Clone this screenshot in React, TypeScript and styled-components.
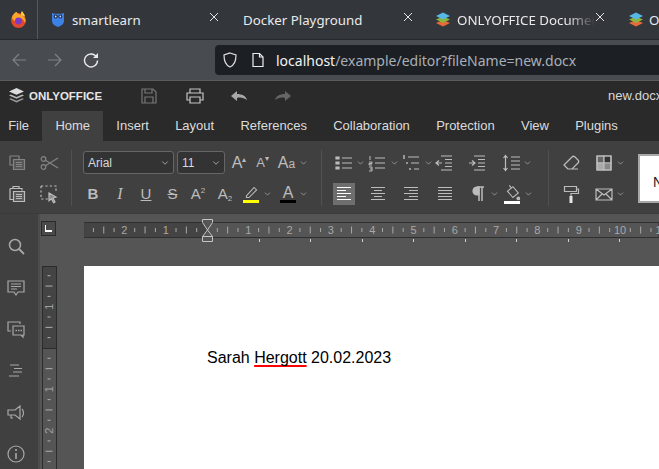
import React from "react";
import styled, { createGlobalStyle } from "styled-components";
import { FiChevronDown } from "react-icons/fi";

const GlobalStyle = createGlobalStyle`
  html, body { margin: 0; padding: 0; background: #555; }
  body { width: 659px; height: 469px; overflow: hidden; font-family: "Liberation Sans", Arial, sans-serif; }
`;

const Page = styled.div`
  width: 659px;
  height: 469px;
  overflow: hidden;
  display: flex;
  flex-direction: column;
`;

/* browser chrome */
const TabBar = styled.div`
  height: 40px;
  flex: none;
  display: flex;
  background: #33363b;
  border-bottom: 1px solid #26282c;
  box-sizing: border-box;
  font-family: "Noto Sans", sans-serif;
  font-size: 13.3px;
  color: #e9eaec;
`;
const FoxCell = styled.div`
  width: 37px;
  flex: none;
  display: flex;
  align-items: center;
  justify-content: center;
  border-right: 1px solid #54575b;
`;
const Tab = styled.div<{ $w: number; $pad: number; $gap: number }>`
  width: ${(p) => p.$w}px;
  flex: none;
  padding-left: ${(p) => p.$pad}px;
  box-sizing: border-box;
  display: flex;
  align-items: center;
  gap: ${(p) => p.$gap}px;
  position: relative;
  white-space: nowrap;
  overflow: hidden;
`;
const TabTitle = styled.span<{ $fade?: boolean }>`
  ${(p) =>
    p.$fade &&
    `width: 138px; overflow: hidden; -webkit-mask-image: linear-gradient(90deg, #000 80%, transparent 100%);`}
`;
const TabClose = styled.span<{ $right: number }>`
  position: absolute;
  right: ${(p) => p.$right}px;
  top: 12px;
  width: 10px;
  height: 10px;
  display: flex;
`;
const NavBar = styled.div`
  height: 41px;
  flex: none;
  display: flex;
  align-items: center;
  background: #484b50;
  border-bottom: 1px solid #5a5c60;
  box-sizing: border-box;
  padding-left: 11px;
`;
const NavButton = styled.span<{ $w: number }>`
  width: ${(p) => p.$w}px;
  flex: none;
  display: flex;
`;
const UrlBar = styled.div`
  flex: 1;
  margin-left: 116px;
  height: 30px;
  background: #1c1f24;
  border-radius: 4px 0 0 4px;
  display: flex;
  align-items: center;
  padding-left: 7px;
  font-family: "Noto Sans", sans-serif;
  font-size: 14px;
  color: #a9afb6;
  gap: 12px;
  white-space: nowrap;
`;
const Host = styled.span`
  color: #f1f2f3;
`;
const UrlText = styled.span`
  margin-left: -2px;
`;

/* editor header */
const AppHeader = styled.div`
  height: 29px;
  flex: none;
  background: #2a2a2a;
  display: flex;
  align-items: center;
  position: relative;
  padding-left: 8px;
  color: #e6e6e6;
`;
const Brand = styled.span`
  display: flex;
  align-items: center;
  gap: 4px;
  font-weight: 700;
  font-size: 11.5px;
  width: 133px;
  flex: none;
`;
const HeadIcon = styled.span<{ $w: number }>`
  width: ${(p) => p.$w}px;
  flex: none;
  display: flex;
`;
const FileName = styled.span`
  position: absolute;
  left: 608px;
  top: 7px;
  font-size: 13px;
  white-space: nowrap;
  color: #d8d8d8;
`;
const MenuBar = styled.div`
  height: 31px;
  flex: none;
  background: #2a2a2a;
  display: flex;
  padding-left: 0;
  font-size: 13px;
  color: #dcdcdc;
  margin-left: -5px;
  width: 664px;
`;
const MenuItem = styled.div<{ $active?: boolean }>`
  flex: none;
  padding: 7px 13.150px 0;
  margin-top: 1px;
  background: ${(p) => (p.$active ? "#404040" : "transparent")};
`;

/* toolbar */
const Toolbar = styled.div`
  height: 73px;
  flex: none;
  background: #404040;
  display: flex;
  padding-top: 10px;
  box-sizing: border-box;
  border-bottom: 1px solid #3a3a3a;
  overflow: hidden;
`;
const Group = styled.div<{ $w: number; $pl?: number }>`
  width: ${(p) => p.$w}px;
  flex: none;
  display: flex;
  flex-direction: column;
  gap: 8px;
  padding-left: ${(p) => p.$pl ?? 11}px;
  box-sizing: border-box;
`;
const Sep = styled.div`
  width: 1px;
  height: 56px;
  margin-top: -1px;
  flex: none;
  background: #505050;
`;
const Row = styled.div`
  height: 23px;
  display: flex;
  align-items: center;
`;
const Cell = styled.span<{ $w: number; $ml?: number; $active?: boolean; $dim?: boolean }>`
  width: ${(p) => p.$w}px;
  margin-left: ${(p) => p.$ml ?? 0}px;
  height: 22px;
  flex: none;
  display: flex;
  align-items: center;
  justify-content: center;
  color: #bcbcbc;
  opacity: ${(p) => (p.$dim ? 0.55 : 1)};
  background: ${(p) => (p.$active ? "#6e6e6e" : "transparent")};
`;
const Letter = styled.span<{ $weight?: number; $italic?: boolean; $line?: string; $size?: number }>`
  font-size: ${(p) => p.$size ?? 15}px;
  font-weight: ${(p) => p.$weight ?? 400};
  font-style: ${(p) => (p.$italic ? "italic" : "normal")};
  text-decoration: ${(p) => p.$line ?? "none"};
  font-family: ${(p) => (p.$italic ? '"Liberation Serif", serif' : '"Liberation Sans", sans-serif')};
  color: #bcbcbc;
  line-height: 1;
`;
const Small = styled.sup`
  font-size: 8px;
  vertical-align: 6px;
  line-height: 0;
`;
const Low = styled.sub`
  font-size: 8px;
  vertical-align: -2px;
  line-height: 0;
`;
const Chev = styled.span`
  width: 9px;
  margin-left: 1px;
  flex: none;
  display: flex;
  color: #c4c4c4;
`;
const ColorBar = styled.span<{ $c: string }>`
  display: block;
  width: 16px;
  height: 3px;
  background: ${(p) => p.$c};
  margin: -1px auto 0;
`;
const Stack = styled.span`
  display: flex;
  flex-direction: column;
  align-items: center;
`;
const Select = styled.div<{ $w: number }>`
  width: ${(p) => p.$w}px;
  height: 23px;
  flex: none;
  box-sizing: border-box;
  border: 1px solid #666;
  border-radius: 3px;
  background: #333;
  display: flex;
  align-items: center;
  justify-content: space-between;
  padding: 0 3px 0 4px;
  font-size: 12px;
  color: #d8d8d8;
  margin-right: 3px;
`;
const StyleBox = styled.div`
  margin-left: 14px;
  margin-top: 3px;
  width: 60px;
  height: 49px;
  flex: none;
  box-sizing: border-box;
  background: #fff;
  border: 2px solid #a8a8a8;
  color: #222;
  font-size: 14px;
  padding: 18px 0 0 13px;
`;

/* work area */
const Main = styled.div`
  flex: 1;
  min-height: 0;
  display: flex;
`;
const SideBar = styled.div`
  width: 32px;
  flex: none;
  background: #404040;
  border-right: 2px solid #4c4c4c;
  display: flex;
  flex-direction: column;
  align-items: center;
  padding: 22px 6px 0 0;
  gap: 21.700px;
  color: #a8a8a8;
`;
const SideIcon = styled.span`
  width: 20px;
  height: 20px;
  display: flex;
`;
const Canvas = styled.div`
  flex: 1;
  min-width: 0;
  background: #555;
  display: grid;
  grid-template-columns: 44px 1fr;
  grid-template-rows: 52px 1fr;
  overflow: hidden;
`;
const CornerCell = styled.div`
  padding: 7px 0 0 1px;
`;
const TabStop = styled.div`
  width: 15px;
  height: 15px;
  box-sizing: border-box;
  border: 1px solid #2b2b2b;
  background: #4a4a4a;
  display: flex;
`;
const HRulerCell = styled.div`
  padding-top: 8px;
  overflow: hidden;
`;
const VRulerCell = styled.div`
  padding-left: 2px;
  overflow: hidden;
`;
const RulerSvg = styled.svg`
  display: block;
  overflow: visible;
`;
const Paper = styled.div`
  background: #fff;
  padding: 82px 0 0 123px;
  color: #000;
  font-size: 16px;
  line-height: 20px;
  white-space: nowrap;
`;
const Misspelled = styled.span`
  text-decoration: underline #f00 1.5px;
  text-decoration-skip-ink: none;
  text-underline-offset: 2px;
`;

const S = ({ children, w = 20, vb = 20 }: { children: React.ReactNode; w?: number; vb?: number }) => (
  <svg width={w} height={w} viewBox={`0 0 ${vb} ${vb}`} fill="none" stroke="currentColor" strokeWidth={1.2}>
    {children}
  </svg>
);

const CloseX = () => (
  <svg width="10" height="10" viewBox="0 0 10 10" stroke="#e4e5e7" strokeWidth="1">
    <path d="M1 1l8 8M9 1l-8 8" />
  </svg>
);

const FirefoxLogo = () => (
  <svg width="17" height="17" viewBox="0 0 17 17">
    <circle cx="8.5" cy="9.5" r="7.5" fill="#e0492d" />
    <path d="M2 6c1-3 3-5 5-5 0 2 3 2 5 3 3 2 4 5 3 8-1-3-3-5-6-5-2 0-4 1-4 3-2-1-3-2-3-4z" fill="#f9a728" />
    <circle cx="8.5" cy="10" r="3.4" fill="#7b3bc6" />
    <path d="M12 0c1 2 3 3 3 6-1-1-3-2-4-2 0-2 0-3 1-4z" fill="#ffcf3d" />
  </svg>
);

const OwlIcon = () => (
  <svg width="12" height="15" viewBox="0 0 12 15">
    <path d="M0 1c2 .8 4 .8 6 .8S10 1.800 12 1v8c0 3-3 5-6 6-3-1-6-3-6-6z" fill="#3c82e6" />
    <circle cx="3.700" cy="4.500" r="2" fill="#1b2a44" />
    <circle cx="8.300" cy="4.500" r="2" fill="#1b2a44" />
    <circle cx="3.700" cy="4.500" r=".9" fill="#cfe0fa" />
    <circle cx="8.300" cy="4.500" r=".9" fill="#cfe0fa" />
  </svg>
);

const LayersIcon = () => (
  <svg width="16" height="15" viewBox="0 0 16 15">
    <path d="M1 11l7-3 7 3-7 3.500z" fill="#e8693a" />
    <path d="M1 7.500l7-3 7 3-7 3.500z" fill="#8ab43c" />
    <path d="M1 4l7-3.500L15 4l-7 3.500z" fill="#55b8e6" />
  </svg>
);

const BrandMark = () => (
  <svg width="17" height="16" viewBox="0 0 17 16" fill="#dcdcdc">
    <path d="M8.500 0l7.500 3.400-7.500 3.400L1 3.400z" />
    <path d="M2.800 6.500l5.700 2.600 5.700-2.600 1.800.9-7.500 3.400L1 7.400z" fill="#b8b8b8" />
    <path d="M2.800 10.200l5.700 2.600 5.700-2.600 1.800.9-7.500 3.400L1 11.100z" fill="#9a9a9a" />
  </svg>
);

const Down = () => <FiChevronDown size={10} strokeWidth={1.6} />;

const icons: Record<string, React.ReactNode> = {
  copy: (
    <>
      <path d="M3 3h9v3M3 3v9h3" />
      <path d="M6.500 6.500h11v10h-11z" fill="#6a6a6a" />
      <path d="M9 9.500h6M9 11.500h6M9 13.500h6" />
    </>
  ),
  cut: (
    <>
      <circle cx="4.500" cy="6" r="2.300" />
      <circle cx="4.500" cy="14" r="2.300" />
      <path d="M6.500 7.200L19 15M6.500 12.800L19 5" />
    </>
  ),
  paste: (
    <>
      <path d="M6 4V2.500h6V4M3 4.500h12v2M3 4.500v11h3" />
      <path d="M6.500 7.500h11v10h-11z" fill="#5a5a5a" />
      <path d="M9 10.500h6M9 12.500h6M9 14.500h6" />
    </>
  ),
  select: (
    <>
      <path d="M2 2h15v7M2 2v13h7" strokeDasharray="2.200 2.200" />
      <path d="M10 9l7 4-3 1 2 4-1.500.7-2-4-2.500 2z" fill="#888" />
    </>
  ),
  bullets: (
    <>
      <path d="M8 5h10M8 10h10M8 15h10" />
      <path d="M2 4h3v2H2zM2 9h3v2H2zM2 14h3v2H2z" fill="currentColor" />
    </>
  ),
  numbered: (
    <>
      <path d="M8 5h10M8 10h10M8 15h10" />
      <path d="M3 3v4M2 9h3v1.500H2V12h3M2 14h3v4H2M3 16h2" strokeWidth="1" />
    </>
  ),
  multi: (
    <>
      <path d="M7 4h11M10 10h8M13 16h5" />
      <path d="M3 2v4M6 9v2M9 15v2" strokeWidth="1.400" />
    </>
  ),
  outdent: <path d="M7 3h11M11 6.500h7M11 10h7M11 13.500h7M7 17h11M8 10H2M5 7.500L2 10l3 2.500" />,
  indent: <path d="M7 3h11M11 6.500h7M11 10h7M11 13.500h7M7 17h11M2 10h6M5 7.500L8 10l-3 2.500" />,
  spacing: <path d="M10 4h9M10 8h9M10 12h9M10 16h9M4.500 2.500v15M2.500 5l2-2.500 2 2.500M2.500 15l2 2.500 2-2.500" />,
  left: <path d="M3 3.500h14M3 6.500h9M3 9.500h14M3 12.500h9M3 15.500h14" stroke="#fff" />,
  center: <path d="M3 3.500h14M6 6.500h8M3 9.500h14M6 12.500h8M3 15.500h14" />,
  right: <path d="M3 3.500h14M8 6.500h9M3 9.500h14M8 12.500h9M3 15.500h14" />,
  justify: <path d="M3 3.500h14M3 6.500h14M3 9.500h14M3 12.500h14M3 15.500h14" />,
  pilcrow: (
    <>
      <path d="M9 3h7M11 3v14M14 3v14" strokeWidth="1.500" />
      <path d="M11 3H9a4 4 0 000 8h2z" fill="currentColor" />
    </>
  ),
  fill: (
    <>
      <path d="M5 8l6-5 6 7-6 5z" />
      <path d="M7 1.500l2.500 3" />
      <circle cx="17" cy="16" r="1.500" fill="currentColor" />
    </>
  ),
  erase: <path d="M3 12l8-8c1-1 2-1 3 0l3 3c1 1 1 2 0 3l-6 6H7zM3 12l4 4M11 16h6" />,
  scheme: (
    <>
      <path d="M3 3h7v7H3z" fill="#666" />
      <path d="M10 3h7v7h-7z" fill="#333" />
      <path d="M3 10h7v7H3z" fill="#aaa" />
      <path d="M10 10h7v7h-7z" fill="#888" />
      <path d="M3 3h14v14H3z" />
    </>
  ),
  roller: (
    <>
      <path d="M3.500 2.500h12v5h-12z" />
      <path d="M15.500 5h2v4.500H10v3" />
      <path d="M8.500 12h3v7h-3z" fill="#e4e4e4" stroke="none" />
    </>
  ),
  mail: <path d="M2 5h16v11H2zM2 5l8 6 8-6M2 16l6-6M18 16l-6-6" />,
};

const Icon = ({ name }: { name: string }) => <S>{icons[name]}</S>;

function HorizontalRuler() {
  const unit = 41.3;
  const zero = 123;
  const marks: React.ReactNode[] = [];
  for (let i = -11; i <= 44; i++) {
    const x = zero + (i * unit) / 4;
    const q = ((i % 4) + 4) % 4;
    if (q === 0) {
      if (i !== 0)
        marks.push(
          <text key={i} x={x} y={12} textAnchor="middle" fontSize="11" fill="#a8a8a8" stroke="none" fontFamily="Liberation Sans">
            {Math.abs(i / 4)}
          </text>
        );
    } else {
      const h = q === 2 ? 3.5 : 2;
      marks.push(<path key={i} d={`M${x} ${8 - h}V${8 + h}`} stroke="#a8a8a8" />);
    }
  }
  const stops = [175, 226, 278, 329, 381, 432, 484, 535];
  return (
    <RulerSvg width="575" height="22" viewBox="0 0 575 22">
      <rect x="0" y="0.500" width="575" height="15" fill="#555" stroke="#2f2f2f" />
      <rect x="0.500" y="1" width="123" height="14" fill="#444" />
      {marks}
      {stops.map((x) => (
        <path key={x} d={`M${x}.500 17v3`} stroke="#d0d0d0" />
      ))}
      <path d="M118.500 -2.500h10v3l-5 7.500-5-7.500zM118.500 14.500l5-6.500 5 6.500z" fill="#555" stroke="#c4c4c4" />
      <path d="M118.500 14.500h10v5h-10z" fill="#555" stroke="#c4c4c4" />
    </RulerSvg>
  );
}

function VerticalRuler() {
  const unit = 41.3;
  const zero = 82;
  const marks: React.ReactNode[] = [];
  for (let i = -7; i <= 20; i++) {
    const y = zero + (i * unit) / 4;
    const q = ((i % 4) + 4) % 4;
    if (q === 0) {
      if (i !== 0)
        marks.push(
          <text key={i} x={0} y={0} textAnchor="middle" fontSize="11" fill="#a0a0a0" transform={`translate(11 ${y}) rotate(-90)`} fontFamily="Liberation Sans">
            {Math.abs(i / 4)}
          </text>
        );
    } else {
      const h = q === 2 ? 3.5 : 1.5;
      marks.push(<path key={i} d={`M${7 - h} ${y}H${7 + h}`} stroke="#b0b0b0" />);
    }
  }
  return (
    <RulerSvg width="15" height="210" viewBox="0 0 15 210">
      <rect x="0.500" y="0.500" width="14" height="82" fill="#444" stroke="#2b2b2b" />
      <rect x="0.500" y="82.500" width="14" height="130" fill="#555" stroke="#2b2b2b" />
      {marks}
    </RulerSvg>
  );
}

export default function App() {
  return (
    <Page>
      <GlobalStyle />
      <TabBar>
        <FoxCell>
          <FirefoxLogo />
        </FoxCell>
        <Tab $w={194} $pad={14} $gap={8}>
          <OwlIcon />
          <TabTitle>smartlearn</TabTitle>
          <TabClose $right={13}>
            <CloseX />
          </TabClose>
        </Tab>
        <Tab $w={193} $pad={11} $gap={9}>
          <TabTitle>Docker Playground</TabTitle>
          <TabClose $right={12}>
            <CloseX />
          </TabClose>
        </Tab>
        <Tab $w={203} $pad={10} $gap={6}>
          <LayersIcon />
          <TabTitle $fade>ONLYOFFICE Document</TabTitle>
          <TabClose $right={23}>
            <CloseX />
          </TabClose>
        </Tab>
        <Tab $w={32} $pad={0} $gap={5}>
          <LayersIcon />
          <TabTitle>O</TabTitle>
        </Tab>
      </TabBar>

      <NavBar>
        <NavButton $w={36}>
          <S w={16} vb={16}>
            <path d="M15 8H2M8 2L2 8l6 6" stroke="#7f8286" />
          </S>
        </NavButton>
        <NavButton $w={36}>
          <S w={16} vb={16}>
            <path d="M1 8h13M8 2l6 6-6 6" stroke="#7f8286" />
          </S>
        </NavButton>
        <NavButton $w={16}>
          <S w={16} vb={16}>
            <path d="M13.500 5A6.500 6.500 0 1014.500 8.500" stroke="#e8e9ea" strokeWidth="1.400" />
            <path d="M10 6h5V1z" fill="#e8e9ea" stroke="none" />
          </S>
        </NavButton>
        <UrlBar>
          <S w={16} vb={16}>
            <path d="M8 1l6 2c0 6-1 10-6 12C3 13 2 9 2 3z" stroke="#dfe0e2" />
          </S>
          <S w={16} vb={16}>
            <path d="M3 1.500h6.500L13 5v9.500H3z" stroke="#eceded" />
            <path d="M9.500 1.500V5H13" stroke="#eceded" />
          </S>
          <UrlText>
            <Host>localhost</Host>/example/editor?fileName=new.docx
          </UrlText>
        </UrlBar>
      </NavBar>

      <AppHeader>
        <Brand>
          <BrandMark />
          ONLYOFFICE
        </Brand>
        <HeadIcon $w={45}>
          <S w={16} vb={16}>
            <path d="M1 1h11l3 3v11H1z" stroke="#777" />
            <path d="M4 1v4h7V1M4 15V9h8v6" stroke="#777" />
          </S>
        </HeadIcon>
        <HeadIcon $w={44}>
          <S w={18} vb={18}>
            <path d="M4 6V2h10v4M4 13H1V6h16v7h-3M4 10h10v6H4z" stroke="#c4c4c4" />
          </S>
        </HeadIcon>
        <HeadIcon $w={44}>
          <S w={18} vb={18}>
            <path d="M1 9l6-5v3c5 0 9 2 10 6-3-2-6-3-10-2v3z" fill="#a8a8a8" stroke="none" />
          </S>
        </HeadIcon>
        <HeadIcon $w={18}>
          <S w={18} vb={18}>
            <path d="M17 9l-6-5v3C6 7 2 9 1 13c3-2 6-3 10-2v3z" fill="#666" stroke="none" />
          </S>
        </HeadIcon>
        <FileName>new.docx</FileName>
      </AppHeader>

      <MenuBar>
        <MenuItem>File</MenuItem>
        <MenuItem $active>Home</MenuItem>
        <MenuItem>Insert</MenuItem>
        <MenuItem>Layout</MenuItem>
        <MenuItem>References</MenuItem>
        <MenuItem>Collaboration</MenuItem>
        <MenuItem>Protection</MenuItem>
        <MenuItem>View</MenuItem>
        <MenuItem>Plugins</MenuItem>
      </MenuBar>

      <Toolbar>
        <Group $w={71} $pl={6}>
          <Row>
            <Cell $w={22} $dim>
              <Icon name="copy" />
            </Cell>
            <Cell $w={32} $ml={5} $dim>
              <Icon name="cut" />
            </Cell>
          </Row>
          <Row>
            <Cell $w={22}>
              <Icon name="paste" />
            </Cell>
            <Cell $w={32} $ml={5}>
              <Icon name="select" />
            </Cell>
          </Row>
        </Group>
        <Sep />
        <Group $w={249}>
          <Row>
            <Select $w={91}>
              Arial
              <Down />
            </Select>
            <Select $w={48}>
              11
              <Down />
            </Select>
            <Cell $w={22}>
              <Letter $size={16}>
                A<Small>▴</Small>
              </Letter>
            </Cell>
            <Cell $w={25}>
              <Letter $size={13}>
                A<Small>▾</Small>
              </Letter>
            </Cell>
            <Cell $w={23}>
              <Letter $size={16}>
                A<Letter $size={12}>a</Letter>
              </Letter>
            </Cell>
            <Chev>
              <Down />
            </Chev>
          </Row>
          <Row>
            <Cell $w={20}>
              <Letter $weight={700}>B</Letter>
            </Cell>
            <Cell $w={26} $ml={4}>
              <Letter $italic $size={16}>
                I
              </Letter>
            </Cell>
            <Cell $w={26}>
              <Letter $line="underline">U</Letter>
            </Cell>
            <Cell $w={27}>
              <Letter $line="line-through">S</Letter>
            </Cell>
            <Cell $w={24}>
              <Letter>
                A<Small>2</Small>
              </Letter>
            </Cell>
            <Cell $w={30}>
              <Letter>
                A<Low>2</Low>
              </Letter>
            </Cell>
            <Cell $w={22}>
              <Stack>
                <S w={17}>
                  <path d="M4 14L13 4l3 3-9 9H4z" />
                </S>
                <ColorBar $c="#ffff00" />
              </Stack>
            </Cell>
            <Chev>
              <Down />
            </Chev>
            <Cell $w={20} $ml={6}>
              <Stack>
                <Letter $size={16}>A</Letter>
                <ColorBar $c="#000" />
              </Stack>
            </Cell>
            <Chev>
              <Down />
            </Chev>
          </Row>
        </Group>
        <Sep />
        <Group $w={226}>
          <Row>
            <Cell $w={22}>
              <Icon name="bullets" />
            </Cell>
            <Chev>
              <Down />
            </Chev>
            <Cell $w={24}>
              <Icon name="numbered" />
            </Cell>
            <Chev>
              <Down />
            </Chev>
            <Cell $w={24}>
              <Icon name="multi" />
            </Cell>
            <Chev>
              <Down />
            </Chev>
            <Cell $w={22}>
              <Icon name="outdent" />
            </Cell>
            <Cell $w={22} $ml={11}>
              <Icon name="indent" />
            </Cell>
            <Cell $w={22} $ml={12}>
              <Icon name="spacing" />
            </Cell>
            <Chev>
              <Down />
            </Chev>
          </Row>
          <Row>
            <Cell $w={22} $active>
              <Icon name="left" />
            </Cell>
            <Cell $w={22} $ml={12}>
              <Icon name="center" />
            </Cell>
            <Cell $w={22} $ml={11}>
              <Icon name="right" />
            </Cell>
            <Cell $w={22} $ml={12}>
              <Icon name="justify" />
            </Cell>
            <Cell $w={22} $ml={11}>
              <Icon name="pilcrow" />
            </Cell>
            <Chev>
              <Down />
            </Chev>
            <Cell $w={22} $ml={2}>
              <Stack>
                <S w={18}>{icons.fill}</S>
                <ColorBar $c="#fff" />
              </Stack>
            </Cell>
            <Chev>
              <Down />
            </Chev>
          </Row>
        </Group>
        <Sep />
        <Group $w={75}>
          <Row>
            <Cell $w={22}>
              <Icon name="erase" />
            </Cell>
            <Cell $w={22} $ml={11}>
              <Icon name="scheme" />
            </Cell>
            <Chev>
              <Down />
            </Chev>
          </Row>
          <Row>
            <Cell $w={22}>
              <Icon name="roller" />
            </Cell>
            <Cell $w={22} $ml={11}>
              <Icon name="mail" />
            </Cell>
            <Chev>
              <Down />
            </Chev>
          </Row>
        </Group>
        <StyleBox>N</StyleBox>
      </Toolbar>

      <Main>
        <SideBar>
          <SideIcon>
            <S w={20}>
              <circle cx="9" cy="9" r="5.500" strokeWidth="1.500" />
              <path d="M13 13l5 5" strokeWidth="1.800" />
            </S>
          </SideIcon>
          <SideIcon>
            <S w={20}>
              <path d="M2 3h16v11h-6l-2 3-2-3H2z" />
              <path d="M5 6h10M5 8.500h10M5 11h6" />
            </S>
          </SideIcon>
          <SideIcon>
            <S w={20}>
              <path d="M5 12H2V3h12v2M7 7h11v9h-1v2l-2-2H7z" />
              <path d="M9.500 11.500h7" strokeDasharray="1.500 1" strokeWidth="1.500" />
            </S>
          </SideIcon>
          <SideIcon>
            <S w={20}>
              <path d="M4 4h9M8 7.500h8M7 11h9M3 15h10" />
            </S>
          </SideIcon>
          <SideIcon>
            <S w={20}>
              <path d="M2 7h7l5-4v13l-5-4H2zM5 12v3h2M16 6c2 2 2 6 0 8" />
            </S>
          </SideIcon>
          <SideIcon>
            <S w={20}>
              <circle cx="10" cy="10" r="8" />
              <path d="M10 9v6M10 5v2" strokeWidth="1.600" />
            </S>
          </SideIcon>
        </SideBar>
        <Canvas>
          <CornerCell>
            <TabStop>
              <svg width="13" height="13" viewBox="0 0 13 13">
                <path d="M4 3v5h6v2H3V3z" fill="#fff" />
              </svg>
            </TabStop>
          </CornerCell>
          <HRulerCell>
            <HorizontalRuler />
          </HRulerCell>
          <VRulerCell>
            <VerticalRuler />
          </VRulerCell>
          <Paper>
            Sarah <Misspelled>Hergott</Misspelled> 20.02.2023
          </Paper>
        </Canvas>
      </Main>
    </Page>
  );
}
